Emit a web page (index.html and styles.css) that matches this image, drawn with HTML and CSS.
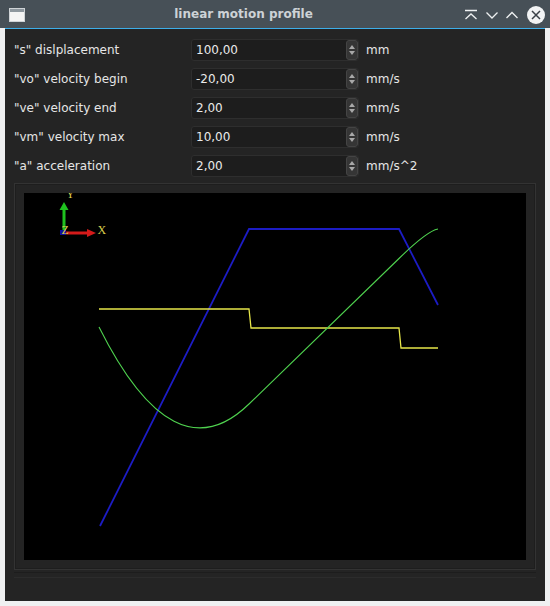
FILE: index.html
```html
<!DOCTYPE html>
<html>
<head>
<meta charset="utf-8">
<link rel="stylesheet" href="styles.css">
</head>
<body>
<div class="titlebar">
  <svg class="app-icon" width="16" height="14" viewBox="0 0 16 14">
    <rect x="0.5" y="0.5" width="15" height="13" fill="#f4f4f4" stroke="#cfd3d6"/>
    <rect x="1" y="1" width="14" height="3" fill="#8e979e"/>
  </svg>
  <div class="title">linear motion profile</div>
  <div class="buttons">
    <svg width="18" height="12" viewBox="0 0 18 12"><path d="M3 1.5h12M3.5 10l5.5-5 5.5 5" fill="none" stroke="#eef0f1" stroke-width="1.3"/></svg>
    <svg width="16" height="12" viewBox="0 0 16 12"><path d="M2.5 3.5l5.5 5.5 5.5-5.5" fill="none" stroke="#eef0f1" stroke-width="1.3"/></svg>
    <svg width="16" height="12" viewBox="0 0 16 12"><path d="M2.5 9l5.5-5.5 5.5 5.5" fill="none" stroke="#eef0f1" stroke-width="1.3"/></svg>
    <svg width="18" height="18" viewBox="0 0 18 18"><circle cx="9" cy="9" r="9" fill="#f2f3f4"/><path d="M5 5l8 8M13 5l-8 8" stroke="#3a4047" stroke-width="1.5"/></svg>
  </div>
</div>
<div class="accent"></div>
<div class="window">
  <div class="form">
    <div class="label">"s" dislplacement</div>
    <div class="spin"><span class="val">100,00</span><span class="arrows"><i class="up"></i><i class="dn"></i></span></div>
    <div class="unit">mm</div>

    <div class="label">"vo" velocity begin</div>
    <div class="spin"><span class="val">-20,00</span><span class="arrows"><i class="up"></i><i class="dn"></i></span></div>
    <div class="unit">mm/s</div>

    <div class="label">"ve" velocity end</div>
    <div class="spin"><span class="val">2,00</span><span class="arrows"><i class="up"></i><i class="dn"></i></span></div>
    <div class="unit">mm/s</div>

    <div class="label">"vm" velocity max</div>
    <div class="spin"><span class="val">10,00</span><span class="arrows"><i class="up"></i><i class="dn"></i></span></div>
    <div class="unit">mm/s</div>

    <div class="label">"a" acceleration</div>
    <div class="spin"><span class="val">2,00</span><span class="arrows"><i class="up"></i><i class="dn"></i></span></div>
    <div class="unit">mm/s^2</div>
  </div>
  <div class="frame">
    <svg class="plot" width="502" height="367" viewBox="24 193 502 367">
      <rect x="24" y="193" width="502" height="367" fill="#000"/>
      <polyline points="100,526 249,229 399,229 438,305" fill="none" stroke="#1c1cc4" stroke-width="1.8"/>
      <polyline points="99,309 249,309 251,328 399,328 401,348 438,348" fill="none" stroke="#e6e64a" stroke-width="1.3"/>
      <path d="M99 327 Q174 477 249 404 L399 258.5 Q427 231 438 229" fill="none" stroke="#4fd24f" stroke-width="1.1"/>
      <rect x="62.5" y="209" width="3" height="22" fill="#1fc21f"/>
      <path d="M59.5 210 L64 202 L68.5 210 Z" fill="#1fc21f"/>
      <rect x="66" y="231.5" width="22" height="3" fill="#d41a1a"/>
      <path d="M87 229 L96 233 L87 237 Z" fill="#d41a1a"/>
      <rect x="60" y="230" width="6" height="5" fill="#1010a0"/>
      <text x="97.5" y="234" class="axl">X</text>
      <text x="61.5" y="234" class="axl">Z</text>
      <text x="66" y="197.5" class="axl">Y</text>
    </svg>
  </div>
  <div class="status"></div>
</div>
</body>
</html>
```

FILE: styles.css
```css
html, body {
  margin: 0;
  padding: 0;
}
body {
  width: 550px;
  height: 606px;
  background: #eff0f1;
  font-family: "DejaVu Sans", sans-serif;
  font-size: 12px;
  overflow: hidden;
}
.titlebar {
  height: 28px;
  background: #475057;
  display: flex;
  align-items: center;
  padding: 0 5px 0 9px;
  box-sizing: border-box;
}
.app-icon {
  flex: none;
  margin-top: 1px;
}
.title {
  flex: 1;
  text-align: center;
  color: #cdd2d6;
  font-weight: bold;
  font-size: 12px;
}
.buttons {
  display: flex;
  align-items: center;
  gap: 4px;
  margin-top: 2px;
}
.buttons svg {
  display: block;
}
.buttons svg:last-child {
  margin-left: 3px;
}
.accent {
  height: 1px;
  background: #3daee9;
  margin: 0 5px;
}
.window {
  margin: 0 5px;
  height: 572px;
  background: #242424;
  color: #e6e6e6;
  display: flex;
  flex-direction: column;
}
.form {
  display: grid;
  grid-template-columns: 177px 175px auto;
  grid-auto-rows: 22px;
  row-gap: 7px;
  column-gap: 0;
  padding: 10px 9px 0 9px;
  align-items: center;
}
.label {
  white-space: nowrap;
}
.spin {
  height: 22px;
  box-sizing: border-box;
  background: #1d1d1d;
  border: 1px solid #2e2e2e;
  border-radius: 3px;
  display: flex;
  align-items: center;
  justify-content: space-between;
  padding-left: 4px;
  width: 168px;
}
.val {
  color: #eaeaea;
}
.arrows {
  width: 12px;
  height: 20px;
  background: #353535;
  border: 1px solid #444;
  border-radius: 3px;
  box-sizing: border-box;
  display: flex;
  flex-direction: column;
  align-items: center;
  justify-content: center;
  gap: 2px;
}
.arrows i {
  display: block;
  width: 0;
  height: 0;
  border-left: 3.5px solid transparent;
  border-right: 3.5px solid transparent;
}
.arrows .up {
  border-bottom: 4px solid #a8a8a8;
}
.arrows .dn {
  border-top: 4px solid #a8a8a8;
}
.unit {
  white-space: nowrap;
}
.frame {
  margin: 6px 9px 0 9px;
  height: 387px;
  box-sizing: border-box;
  border: 1px solid #333;
  box-shadow: inset 0 0 0 1px #1e1e1e;
  padding: 9px;
}
.plot {
  display: block;
}
.axl {
  font-family: "Liberation Serif", serif;
  font-size: 12px;
  fill: #d8cd4c;
}
.status {
  margin: 2px 9px 0 9px;
  height: 4px;
  border-top: 1px solid #1d1d1d;
  border-bottom: 1px solid #2c2c2c;
}
```
